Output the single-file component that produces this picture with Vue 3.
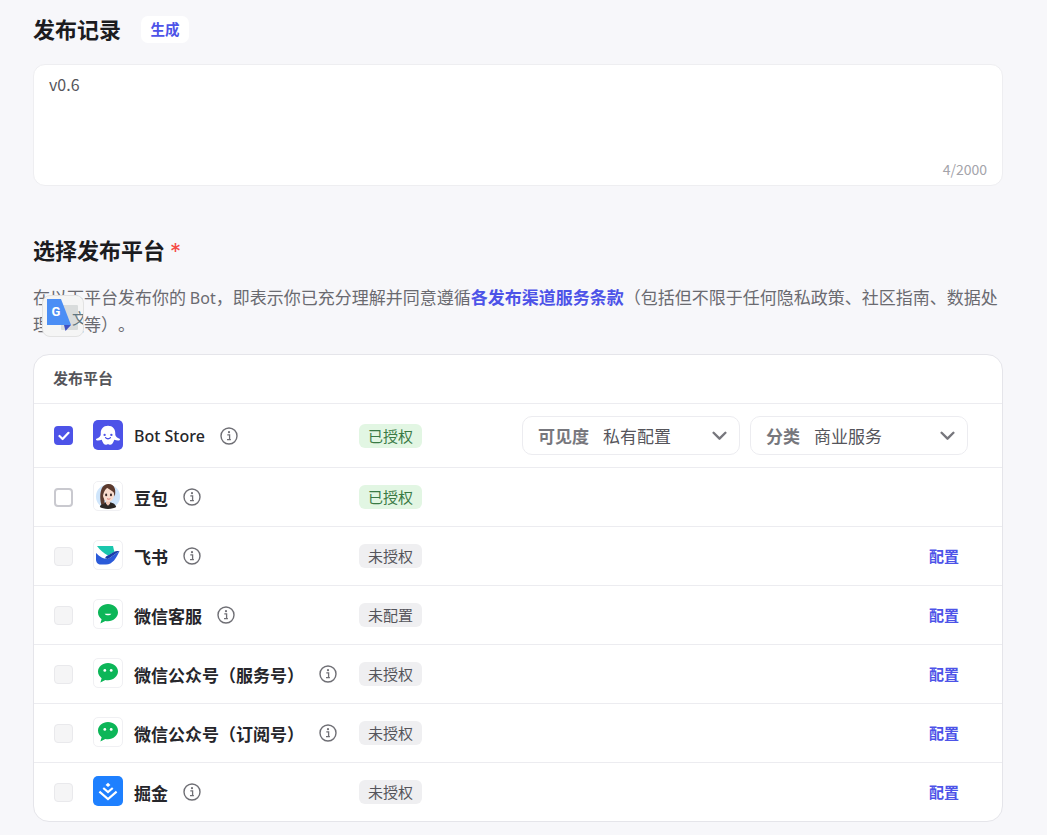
<template>
  <div class="page">
    <div class="section-head">
      <h2 class="section-title">发布记录</h2>
      <button class="gen-btn">生成</button>
    </div>
    <div class="notes">
      <div class="notes-text">v0.6</div>
      <div class="notes-count">4/2000</div>
    </div>

    <h2 class="section-title platform-title">选择发布平台<span class="required">*</span></h2>
    <p class="desc">
      在以下平台发布你的 <span class="latin">Bot</span>，即表示你已充分理解并同意遵循<a class="desc-link">各发布渠道服务条款</a>（包括但不限于任何隐私政策、社区指南、数据处理协议等）。
      <!-- browser translate widget sitting over the text -->
      <span class="translate-badge">
        <svg width="42" height="42" viewBox="0 0 42 42">
          <rect x="19" y="10" width="17" height="25" rx="1" fill="#d9dcdc" />
          <text x="30" y="29" class="translate-char">文</text>
          <path d="M5 4H19L29 30H5Z" fill="#4b8ef5" />
          <path d="M22 30H29L23.5 36Z" fill="#3f51c4" />
          <text x="14" y="21" class="translate-g">G</text>
        </svg>
      </span>
    </p>

    <div class="table">
      <div class="table-head">发布平台</div>
      <div v-for="row in rows" :key="row.name" class="row" :class="{ 'row--first': row.first }">
        <div class="platform">
          <span class="check" :class="{ 'check--on': row.checked, 'check--off': row.disabled }">
            <svg v-if="row.checked" width="12" height="10" viewBox="0 0 12 10">
              <path d="M1.5 5L4.6 8L10.5 1.8" fill="none" stroke="#fff" stroke-width="2.2" stroke-linecap="round" stroke-linejoin="round" />
            </svg>
          </span>

          <span class="logo" :class="{ 'logo--plain': row.logo === 'bot' || row.logo === 'juejin' }">
            <svg v-if="row.logo === 'bot'" width="30" height="30" viewBox="0 0 31 31">
              <rect width="31" height="31" rx="4" fill="#4d53e8" />
              <path d="M15.5 6C10.5 6 8 9.5 8 13.5V15C8 16.8 6 18.6 3.5 19.5C2.8 20 3 21 4 21.1C6 21.3 7.5 21 9 20.4C10 23.5 11.5 25.6 13.3 25.6C14.2 25.6 14.7 25 15.5 25C16.3 25 16.8 25.6 17.7 25.6C19.5 25.6 21 23.5 22 20.4C23.5 21 25 21.3 27 21.1C28 21 28.2 20 27.5 19.5C25 18.6 23 16.8 23 15V13.5C23 9.5 20.5 6 15.5 6Z" fill="#fff" />
              <circle cx="12" cy="15.4" r="1.2" fill="#4d53e8" />
              <circle cx="19" cy="15.4" r="1.2" fill="#4d53e8" />
              <path d="M13 18.2C14.2 19.8 16.8 19.8 18 18.2" fill="none" stroke="#4d53e8" stroke-width="1.4" stroke-linecap="round" />
            </svg>

            <svg v-else-if="row.logo === 'doubao'" width="26" height="26" viewBox="0 0 27 27">
              <circle cx="13.5" cy="14" r="12.5" fill="#cfe5fb" />
              <path d="M5 25C6 21 10 20 13.5 20C17 20 21 21 22 25C19 27.5 8 27.5 5 25Z" fill="#2b2624" />
              <path d="M11.5 18H15.5V21.5L13.5 23.5L11.5 21.5Z" fill="#f3c7b4" />
              <path d="M6.5 22C4.5 14 5 1.5 13.5 1C21 0.5 22 8 20.5 14L19 9L9 7.5C9 12 10 17 10 22Z" fill="#5c3b2e" />
              <ellipse cx="14" cy="12.2" rx="5.8" ry="7.2" fill="#f9dccd" />
              <path d="M12.5 5C10.5 6.8 9 9.5 8.4 13L7.5 9L10 4.5Z" fill="#5c3b2e" />
              <path d="M12.5 5C15 7 18 8 20 10.5L19.5 6L15 4Z" fill="#5c3b2e" />
              <ellipse cx="11.6" cy="12.4" rx="1.1" ry="1.4" fill="#3a2a28" />
              <ellipse cx="16.6" cy="12.4" rx="1.1" ry="1.4" fill="#3a2a28" />
              <path d="M12.8 16.4C13.6 17 14.8 17 15.6 16.4" fill="none" stroke="#d0605a" stroke-width="0.9" stroke-linecap="round" />
            </svg>

            <svg v-else-if="row.logo === 'lark'" width="24" height="20" viewBox="0 0 24 20">
              <path d="M1 1H17L18.4 7L12 10.5C8 8.5 4 5 1 1Z" fill="#1ac7ad" />
              <path d="M0 8C3 11 7 14 12 14L23.5 6C20.5 13 16.5 19.5 10 19.5H5C2 19.5 0 17.5 0 14.5Z" fill="#2b5bd9" />
              <path d="M10 11.4L17 7.4C19 6.2 21.5 5.8 23.5 6L12 14L9 13.2Z" fill="#1b3da8" />
            </svg>

            <svg v-else-if="row.logo === 'wxkf'" width="20" height="20" viewBox="0 0 20 20">
              <path d="M10 0C4.5 0 0 3.8 0 8.6C0 11.3 1.4 13.7 3.6 15.3L2.4 19.4L7.3 16.9C8.2 17.1 9 17.2 10 17.2C15.5 17.2 20 13.4 20 8.6C20 3.8 15.5 0 10 0Z" fill="#0cb658" />
              <path d="M6.6 9.8C8 11.8 12 11.8 13.4 9.8Z" fill="#fff" />
            </svg>

            <svg v-else-if="row.logo === 'wxmp'" width="20" height="20" viewBox="0 0 20 20">
              <path d="M10 0C4.5 0 0 3.8 0 8.6C0 11.3 1.4 13.7 3.6 15.3L2.4 19.4L7.3 16.9C8.2 17.1 9 17.2 10 17.2C15.5 17.2 20 13.4 20 8.6C20 3.8 15.5 0 10 0Z" fill="#0cb658" />
              <circle cx="6.8" cy="7.4" r="1.4" fill="#fff" />
              <circle cx="13.2" cy="7.4" r="1.4" fill="#fff" />
            </svg>

            <svg v-else width="30" height="30" viewBox="0 0 31 31">
              <rect width="31" height="31" rx="3" fill="#1e80ff" />
              <path d="M15.5 7L18 9.2L15.5 11.4L13 9.2Z" fill="#fff" />
              <path d="M10.6 12.4L15.5 16.6L20.4 12.4" fill="none" stroke="#fff" stroke-width="2.2" />
              <path d="M6.6 16.2L15.5 23.8L24.4 16.2" fill="none" stroke="#fff" stroke-width="2.2" />
            </svg>
          </span>

          <span class="name" :class="{ latin: row.logo === 'bot' }">{{ row.name }}</span>
          <svg class="info" width="18" height="18" viewBox="0 0 18 18">
            <circle cx="9" cy="9" r="8" fill="none" stroke="#6f6f75" stroke-width="1.4" />
            <circle cx="9" cy="5.2" r="1.1" fill="#6f6f75" />
            <path d="M7.3 7.9H9.6V12.6H10.9M7 12.6H9.6" fill="none" stroke="#6f6f75" stroke-width="1.3" />
          </svg>
        </div>

        <span class="status" :class="{ 'status--ok': row.ok }">{{ row.status }}</span>

        <div v-if="row.first" class="selects">
          <div v-for="sel in selects" :key="sel.label" class="select">
            <span class="select-label">{{ sel.label }}</span>
            <span class="select-value">{{ sel.value }}</span>
            <svg class="select-arrow" width="15" height="10" viewBox="0 0 14 9">
              <path d="M1.5 1.5L7 7L12.5 1.5" fill="none" stroke="#77777d" stroke-width="2.2" stroke-linecap="round" stroke-linejoin="round" />
            </svg>
          </div>
        </div>
        <a v-else-if="row.disabled" class="config">配置</a>
      </div>
    </div>
  </div>
</template>

<script setup>
const selects = [
  { label: '可见度', value: '私有配置' },
  { label: '分类', value: '商业服务' }
]

const rows = [
  { name: 'Bot Store', logo: 'bot', status: '已授权', ok: true, checked: true, first: true },
  { name: '豆包', logo: 'doubao', status: '已授权', ok: true },
  { name: '飞书', logo: 'lark', status: '未授权', disabled: true },
  { name: '微信客服', logo: 'wxkf', status: '未配置', disabled: true },
  { name: '微信公众号（服务号）', logo: 'wxmp', status: '未授权', disabled: true },
  { name: '微信公众号（订阅号）', logo: 'wxmp', status: '未授权', disabled: true },
  { name: '掘金', logo: 'juejin', status: '未授权', disabled: true }
]
</script>

<style>
html, body {
  margin: 0;
  background: #f7f7fa;
}
</style>

<style scoped>
.page {
  height: 835px;
  box-sizing: border-box;
  overflow: hidden;
  padding: 16px 44px 0 33px;
  background: #f7f7fa;
  font-family: "Noto Sans CJK SC", sans-serif;
  color: #1f1f23;
  text-spacing-trim: space-all;
}

.latin {
  font-family: "Noto Sans", sans-serif;
  font-size: 16px;
  line-height: 1;
}

.section-head {
  display: flex;
  align-items: center;
  gap: 20px;
  height: 27px;
}

.section-title {
  margin: 0;
  padding-bottom: 4px;
  font-size: 22px;
  line-height: 24px;
  font-weight: 700;
  color: #1c1c1f;
}

.gen-btn {
  width: 48px;
  height: 27px;
  padding: 0 0 2px;
  border: none;
  border-radius: 7px;
  background: #fff;
  color: #4d53e8;
  font: 700 14.5px/25px "Noto Sans CJK SC", sans-serif;
}

.notes {
  margin-top: 21px;
  height: 122px;
  box-sizing: border-box;
  padding: 9px 15px 7px;
  display: flex;
  flex-direction: column;
  justify-content: space-between;
  background: #fff;
  border: 1px solid #eeeef1;
  border-radius: 12px;
}

.notes-text {
  font-size: 16px;
  line-height: 20px;
  color: #55555b;
}

.notes-count {
  align-self: flex-end;
  font-size: 14px;
  line-height: 18px;
  color: #a4a4aa;
}

.platform-title {
  margin-top: 51px;
}

.required {
  margin-left: 5px;
  font-family: Inter, sans-serif;
  line-height: 1;
  color: #f54a45;
  font-weight: 400;
}

.desc {
  position: relative;
  margin: 17px 0 0;
  font-size: 17px;
  line-height: 27px;
  color: #6a6a70;
}

.desc-link {
  color: #4d53e8;
  font-weight: 700;
}

.translate-badge {
  position: absolute;
  left: 9px;
  top: 12px;
  width: 42px;
  height: 42px;
  box-sizing: border-box;
  background: #f5f5f5;
  border: 1px solid #e2e2e2;
  border-radius: 8px;
  overflow: hidden;
}

.translate-badge svg {
  display: block;
  margin: -1px;
}

.translate-char {
  font: 15px "Noto Sans CJK SC", sans-serif;
  fill: #5f7580;
}

.translate-g {
  font: 700 13px Roboto, sans-serif;
  fill: #fff;
  text-anchor: middle;
}

.table {
  margin-top: 17px;
  background: #fff;
  border: 1px solid #e5e5ea;
  border-radius: 16px;
  overflow: hidden;
}

.table-head {
  height: 48px;
  box-sizing: border-box;
  padding-left: 19px;
  font-size: 15px;
  line-height: 46px;
  font-weight: 700;
  color: #55555b;
}

.row {
  display: flex;
  align-items: center;
  height: 59px;
  padding-left: 20px;
  padding-right: 43px;
  border-top: 1px solid #ececf0;
  box-sizing: border-box;
}

.row--first {
  height: 64px;
}

.platform {
  display: flex;
  align-items: center;
  width: 305px;
  flex-shrink: 0;
}

.check {
  display: flex;
  align-items: center;
  justify-content: center;
  width: 19px;
  height: 19px;
  box-sizing: border-box;
  border: 2px solid #c9c9cf;
  border-radius: 4px;
  background: #fff;
  margin-right: 20px;
  flex-shrink: 0;
}

.check--on {
  background: #4d53e8;
  border-color: #4d53e8;
}

.check--off {
  background: #f5f5f6;
  border: 1px solid #e9e9ec;
}

.logo {
  display: flex;
  align-items: center;
  justify-content: center;
  width: 30px;
  height: 30px;
  box-sizing: border-box;
  border: 1px solid #f0f0f3;
  border-radius: 5px;
  margin-right: 11px;
  margin-bottom: 2px;
  flex-shrink: 0;
  overflow: hidden;
}

.logo--plain {
  border: none;
}

.name {
  font-size: 17px;
  font-weight: 700;
  color: #26262b;
  white-space: nowrap;
}

.name.latin {
  font-size: 16px;
  font-weight: 500;
}

.info {
  margin-left: 15px;
  flex-shrink: 0;
}

.status {
  width: 63px;
  height: 24px;
  border-radius: 6px;
  text-align: center;
  font-size: 15px;
  line-height: 24px;
  background: #efeff1;
  color: #55555b;
  flex-shrink: 0;
}

.status--ok {
  background: #e2f6e3;
  color: #3a7a45;
}

.selects {
  display: flex;
  gap: 10px;
  margin-left: 100px;
}

.select {
  display: flex;
  align-items: center;
  width: 218px;
  height: 39px;
  box-sizing: border-box;
  padding: 0 12px 0 15px;
  border: 1px solid #ececf0;
  border-radius: 10px;
  font-size: 17px;
}

.select-label {
  font-weight: 700;
  color: #77777d;
  margin-right: 14px;
}

.select-value {
  color: #55555b;
}

.select-arrow {
  margin-left: auto;
}

.config {
  margin-left: auto;
  margin-bottom: 2px;
  font-size: 15px;
  font-weight: 700;
  color: #4d53e8;
}
</style>
